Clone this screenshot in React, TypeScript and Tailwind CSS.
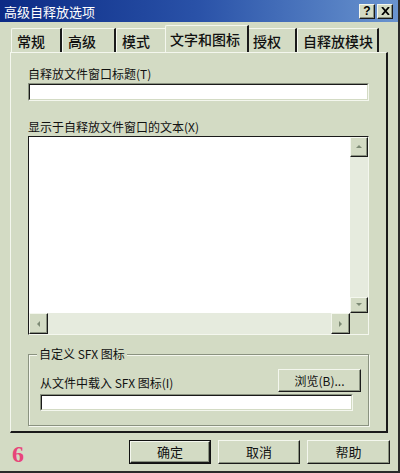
import React from 'react';

const font = { fontFamily: '"Noto Sans CJK SC", "Noto Sans", sans-serif' };

const Raised = ({ className = '', children }: { className?: string; children?: React.ReactNode }) => (
  <div className={`border border-t-[#f4f7ee] border-l-[#f4f7ee] border-r-[#1a1a1a] border-b-[#1a1a1a] bg-[#d3dbc4] shadow-[inset_-1px_-1px_0_#8a9280] ${className}`}>
    {children}
  </div>
);

const Sunken = ({ className = '', children }: { className?: string; children?: React.ReactNode }) => (
  <div className={`border border-t-[#8a9280] border-l-[#8a9280] border-r-[#f4f7ee] border-b-[#f4f7ee] ${className}`}>
    <div className="h-full w-full border border-t-[#1a1a1a] border-l-[#1a1a1a] border-r-[#d3dbc4] border-b-[#d3dbc4] bg-white">{children}</div>
  </div>
);

const Arrow = ({ dir }: { dir: 'up' | 'down' | 'left' | 'right' }) => {
  const pts = { up: '1,5 4,2 7,5', down: '1,2 4,5 7,2', left: '5,1 2,4 5,7', right: '2,1 5,4 2,7' }[dir];
  return (
    <svg width="8" height="8" viewBox="0 0 8 8"><polygon points={pts} fill="#7d8a74" /></svg>
  );
};

export default function App() {
  const tabs = [
    { label: '常规', w: 'w-[51px]' },
    { label: '高级', w: 'w-[54px]' },
    { label: '模式', w: 'w-[51px]' },
    { label: '文字和图标', w: 'w-[84px]', active: true },
    { label: '授权', w: 'w-[50px]' },
    { label: '自释放模块', w: 'w-[82px]' },
  ];

  return (
    <div style={font} className="w-[400px] h-[473px] bg-[#d3dbc4] flex flex-col border-r-2 border-b-2 border-r-[#2a2a2a] border-b-[#2a2a2a] overflow-hidden">
      {/* title bar */}
      <div className="h-[22px] flex items-center justify-between px-[4px] bg-gradient-to-r from-[#0c2a85] via-[#2a52a8] to-[#6a94cf]">
        <span className="text-white text-[13px] leading-none">高级自释放选项</span>
        <div className="flex gap-[2px] mr-[1px]">
          <Raised className="w-[16px] h-[15px] flex items-center justify-center">
            <span className="text-[12px] font-bold leading-none text-black" style={{ fontFamily: '"Liberation Sans", sans-serif' }}>?</span>
          </Raised>
          <Raised className="w-[16px] h-[15px] flex items-center justify-center">
            <svg width="9" height="8" viewBox="0 0 9 8"><path d="M1 0 L8 8 M8 0 L1 8" stroke="#000" strokeWidth="1.8" /></svg>
          </Raised>
        </div>
      </div>

      {/* tabs */}
      <div className="flex items-end pl-[11px] h-[30px]">
        {tabs.map((t) => (
          <div
            key={t.label}
            className={`${t.w} shrink-0 whitespace-nowrap flex items-center ${t.active ? 'h-[27px] -mx-[2px] px-[4px] relative z-10 bg-[#d3dbc4]' : 'h-[24px] px-[5px]'} border-l border-t border-l-[#f4f7ee] border-t-[#f4f7ee] border-r-2 border-r-[#1a1a1a] rounded-tl-[2px] text-[14px] font-medium text-[#111] leading-none`}
          >
            {t.label}
          </div>
        ))}
      </div>

      {/* panel */}
      <div className="mx-[10px] h-[381px] border border-l-[#f4f7ee] border-t-[#f4f7ee] border-r-2 border-b-2 border-r-[#1a1a1a] border-b-[#1a1a1a] px-[17px] pt-[14px] flex flex-col">
        <div className="text-[12px] leading-[14px] text-[#111]">自释放文件窗口标题(T)</div>
        <Sunken className="mt-[2px] h-[18px]" />

        <div className="mt-[19px] text-[12px] leading-[14px] text-[#111]">显示于自释放文件窗口的文本(X)</div>
        <div className="mt-[2px] h-[199px] border border-t-[#1a1a1a] border-l-[#1a1a1a] border-r-[#f4f7ee] border-b-[#f4f7ee] flex flex-col">
          <div className="flex flex-1">
            <div className="flex-1 bg-white" />
            <div className="w-[18px] flex flex-col bg-[#e6ebde]">
              <Raised className="h-[20px] flex items-center justify-center"><Arrow dir="up" /></Raised>
              <div className="flex-1" />
              <Raised className="h-[16px] flex items-center justify-center"><Arrow dir="down" /></Raised>
            </div>
          </div>
          <div className="h-[21px] flex">
            <div className="flex-1 flex bg-[#e6ebde]">
              <Raised className="w-[19px] flex items-center justify-center"><Arrow dir="left" /></Raised>
              <div className="flex-1" />
              <Raised className="w-[19px] flex items-center justify-center"><Arrow dir="right" /></Raised>
            </div>
            <div className="w-[18px] bg-[#d3dbc4]" />
          </div>
        </div>

        {/* group box */}
        <div className="mt-[19px] h-[72px] relative border border-[#8a9280] shadow-[1px_1px_0_#f4f7ee,inset_1px_1px_0_#f4f7ee] px-[11px] pt-[14px]">
          <div className="absolute -top-[9px] left-[8px] px-[2px] bg-[#d3dbc4] text-[12px] leading-[16px] text-[#111]">自定义 SFX 图标</div>
          <div className="flex items-end justify-between">
            <div className="text-[12px] leading-[14px] text-[#111] mb-[2px]">从文件中载入 SFX 图标(I)</div>
            <Raised className="w-[83px] h-[23px] flex items-center justify-center -mr-[4px]">
              <span className="text-[12px] text-[#111]">浏览(B)...</span>
            </Raised>
          </div>
          <Sunken className="mt-[2px] h-[17px] mr-[4px]" />
        </div>
      </div>

      {/* bottom */}
      <div className="flex items-center mt-[5px] pl-[12px] pr-[8px]">
        <span className="text-[24px] font-bold text-[#e8457a] leading-none mt-[4px]" style={{ fontFamily: '"Liberation Serif", serif' }}>6</span>
        <div className="ml-auto flex gap-[7px]">
          <div className="border border-[#111]">
            <Raised className="w-[80px] h-[22px] flex items-center justify-center text-[13px] text-[#111]">确定</Raised>
          </div>
          <Raised className="w-[82px] h-[24px] flex items-center justify-center text-[13px] text-[#111]">取消</Raised>
          <Raised className="w-[83px] h-[24px] flex items-center justify-center text-[13px] text-[#111]">帮助</Raised>
        </div>
      </div>
    </div>
  );
}
